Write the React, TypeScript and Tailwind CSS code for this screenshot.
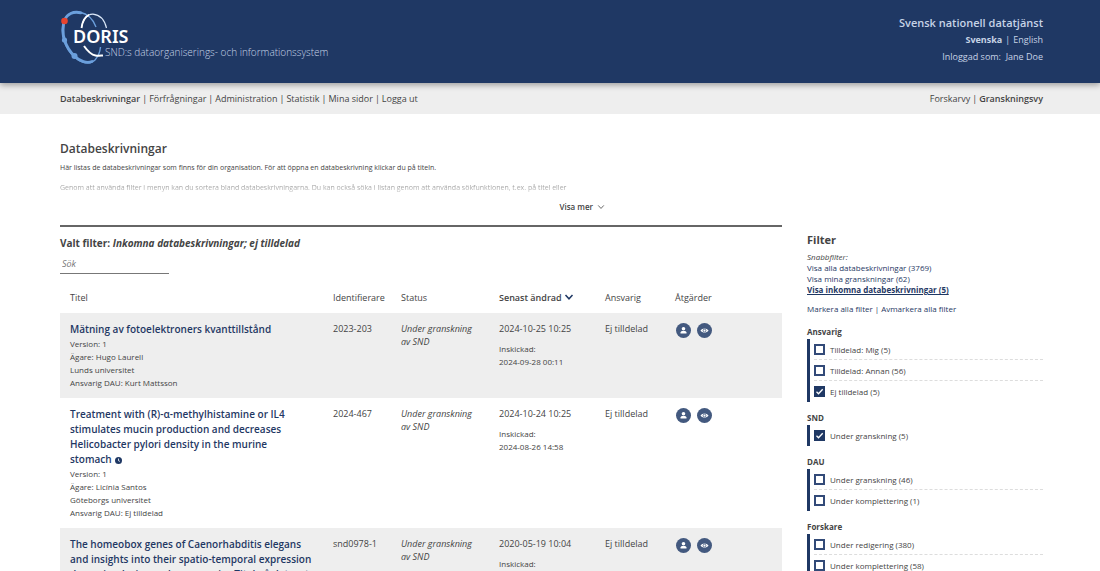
import { Fragment, type ReactNode } from "react";

type Dataset = {
  title: string;
  lastWord?: string;
  details: string[];
  id: string;
  changed: string;
  submitted: string;
};

const datasets: Dataset[] = [
  {
    title: "Mätning av fotoelektroners kvanttillstånd",
    details: ["Version: 1", "Ägare: Hugo Laurell", "Lunds universitet", "Ansvarig DAU: Kurt Mattsson"],
    id: "2023-203",
    changed: "2024-10-25 10:25",
    submitted: "2024-09-28 00:11",
  },
  {
    title: "Treatment with (R)-α-methylhistamine or IL4 stimulates mucin production and decreases Helicobacter pylori density in the murine",
    lastWord: "stomach",
    details: ["Version: 1", "Ägare: Licínia Santos", "Göteborgs universitet", "Ansvarig DAU: Ej tilldelad"],
    id: "2024-467",
    changed: "2024-10-24 10:25",
    submitted: "2024-08-26 14:58",
  },
  {
    title: "The homeobox genes of Caenorhabditis elegans and insights into their spatio-temporal expression dynamics during embryogenesis - Titel på dataset",
    details: ["Version: 1"],
    id: "snd0978-1",
    changed: "2020-05-19 10:04",
    submitted: "2020-05-19 10:04",
  },
];

const filterGroups = [
  {
    name: "Ansvarig",
    options: [
      { label: "Tilldelad: Mig (5)", checked: false },
      { label: "Tilldelad: Annan (56)", checked: false },
      { label: "Ej tilldelad (5)", checked: true },
    ],
  },
  { name: "SND", options: [{ label: "Under granskning (5)", checked: true }] },
  {
    name: "DAU",
    options: [
      { label: "Under granskning (46)", checked: false },
      { label: "Under komplettering (1)", checked: false },
    ],
  },
  {
    name: "Forskare",
    options: [
      { label: "Under redigering (380)", checked: false },
      { label: "Under komplettering (58)", checked: false },
    ],
  },
];

const menu = ["Databeskrivningar", "Förfrågningar", "Administration", "Statistik", "Mina sidor", "Logga ut"];

function LogoMark() {
  return (
    <svg viewBox="0 0 56 56" className="absolute top-0 left-0 size-14" fill="none" aria-hidden="true">
      <path d="M36 17C33 9 27 3.500 20 2.200C12 1 6 5 4 10C1.500 17 2 25 4 31C6.500 38 11 44 15 47.500C21 53 30 55 35 50C38.500 46 40 42 40.500 37" stroke="#6b9fdc" strokeWidth="1.400" />
      <path d="M21 2.800C13 1 7 4 5 9.500C2.500 15 2.500 24 4.500 30C7 38 11 43 15 46.500C20 51.500 27 53.500 32 51.500" stroke="#6b9fdc" strokeWidth="2.800" strokeLinecap="round" />
      <circle cx="4.500" cy="30" r="2.600" fill="#6b9fdc" />
      <circle cx="14.500" cy="46" r="3" fill="#6b9fdc" />
      <path d="M21.500 18C22.500 9.500 27 4 33 4.200C39.500 4.800 44.500 10 46.500 18" stroke="#dbe8f8" strokeWidth="1.200" />
      <path d="M21.500 18C22.500 11 25 6.500 29 4.800" stroke="#fff" strokeWidth="1.800" />
      <path d="M24 36C27.500 41 31.500 44.800 35.500 45.500C38 46 40 45.700 43 45.500" stroke="#fff" strokeWidth="2" />
      <circle cx="4.500" cy="11" r="3.300" fill="#e8442e" />
    </svg>
  );
}

function Chevron({ className }: { className: string }) {
  return (
    <svg viewBox="0 0 10 8" className={className} fill="none" stroke="currentColor" aria-hidden="true">
      <path d="M1.500 2L5 5.800L8.500 2" />
    </svg>
  );
}

function RoundButton({ label, children }: { label: string; children: ReactNode }) {
  return (
    <button type="button" aria-label={label} className="flex size-[15px] items-center justify-center rounded-full bg-[#43597f] text-white">
      <svg viewBox="0 0 15 15" className="size-[15px]" aria-hidden="true">
        {children}
      </svg>
    </button>
  );
}

function Separator() {
  return <span className="px-[3px]">|</span>;
}

function DatasetRow({ data }: { data: Dataset }) {
  return (
    <tr className="align-top odd:bg-[#eeeeee]">
      <td className="px-2.5 py-[9px]">
        <a href="#" className="block text-[10px] leading-[15px] font-semibold text-[#1f3864]">
          {data.title}{" "}
          {data.lastWord && (
            <span className="whitespace-nowrap">
              {data.lastWord}
              <svg viewBox="0 0 8 8" className="ml-[3px] inline size-[7px]" aria-hidden="true">
                <circle cx="4" cy="4" r="4" fill="#1f3864" />
                <path d="M4 1.800V4.200L5.500 5" stroke="#fff" strokeWidth="1" fill="none" />
              </svg>
            </span>
          )}
        </a>
        <div className="text-[8px] leading-[13px]">
          {data.details.map((d) => (
            <p key={d}>{d}</p>
          ))}
        </div>
      </td>
      <td className="py-[9px] pl-2.5">{data.id}</td>
      <td className="py-[9px] pr-3 pl-2.5 italic">Under granskning av&nbsp;SND</td>
      <td className="py-[9px] pl-2.5">
        <p>{data.changed}</p>
        <p className="mt-[7px] text-[8px] leading-[13px]">
          Inskickad:
          <br />
          {data.submitted}
        </p>
      </td>
      <td className="py-[9px] pl-2.5">Ej tilldelad</td>
      <td className="py-2.5 pl-[11px]">
        <div className="flex gap-[6px]">
          <RoundButton label="Tilldela">
            <circle cx="7.500" cy="5.700" r="1.800" fill="#fff" />
            <path d="M4.500 10.600V9.600C4.500 8.400 5.600 7.900 6.500 7.900H8.500C9.400 7.900 10.500 8.400 10.500 9.600V10.600Z" fill="#fff" />
          </RoundButton>
          <RoundButton label="Visa">
            <path d="M3.500 7.600C5.300 4.700 9.700 4.700 11.500 7.600C9.700 10.400 5.300 10.400 3.500 7.600Z" fill="#fff" />
            <circle cx="7.500" cy="7.600" r="1.400" fill="#fff" stroke="#43597f" strokeWidth="0.800" />
          </RoundButton>
        </div>
      </td>
    </tr>
  );
}

export default function App() {
  return (
    <div className="h-screen overflow-hidden bg-white font-['Open_Sans',sans-serif] text-[9px] leading-[13px] text-[#444444]">
      <header className="relative flex h-[83px] justify-between bg-[#1f3864] pr-[57px] pl-[60px] text-[#c6d3e6] shadow-[0_2px_6px_rgba(0,0,0,0.35)]">
        <a href="#" className="relative mt-[10px] block h-14">
          <LogoMark />
          <span className="relative block pt-[14px] pl-[13px] font-['Noto_Sans',sans-serif] text-[18px] leading-6 font-semibold text-white">DORIS</span>
          <span className="relative -mt-px block pl-[45px] text-[10px] leading-[11px] font-light">SND:s dataorganiserings- och informationssystem</span>
        </a>
        <div className="pt-[14px] text-right leading-[17px]">
          <p className="text-[11px] font-semibold">Svensk nationell datatjänst</p>
          <p>
            <a href="#" className="font-bold">Svenska</a>
            <Separator />
            <a href="#">English</a>
          </p>
          <p>Inloggad som:&nbsp; Jane Doe</p>
        </div>
      </header>

      <div className="flex h-[31px] items-center justify-between bg-[#eeeeee] pr-[57px] pl-[60px]">
        <nav className="flex">
          {menu.map((item, i) => (
            <Fragment key={item}>
              {i > 0 && <span className="px-[2px]">|</span>}
              <a href="#" className={i === 0 ? "font-semibold" : ""}>{item}</a>
            </Fragment>
          ))}
        </nav>
        <div>
          <a href="#">Forskarvy</a>
          <span className="px-[2px]">|</span>
          <a href="#" className="font-semibold">Granskningsvy</a>
        </div>
      </div>

      <div className="flex gap-[25px] pt-[27px] pr-[57px] pl-[60px]">
        <main className="min-w-0 flex-1">
          <h1 className="text-[12px] leading-4 font-semibold">Databeskrivningar</h1>
          <div className="border-b-2 border-[#666666] pt-1 pb-[11px]">
            <div className="w-[545px] max-w-full">
              <p className="text-[7px] leading-[14px]">
                Här listas de databeskrivningar som finns för din organisation. För att öppna en databeskrivning klickar du på titeln.
              </p>
              <p className="mt-[6px] bg-linear-to-b from-[#777777] to-[#dddddd] bg-clip-text text-[7px] leading-[14px] text-transparent">
                Genom att använda filter i menyn kan du sortera bland databeskrivningarna. Du kan också söka i listan genom att använda sökfunktionen, t.ex. på titel eller
              </p>
              <button type="button" className="mt-[5px] ml-auto flex items-center gap-1 text-[8px] leading-[14px] font-semibold">
                Visa mer
                <Chevron className="h-2 w-2" />
              </button>
            </div>
          </div>
          <h2 className="mt-[9px] text-[10px] leading-[14px] font-bold">
            Valt filter: <em>Inkomna databeskrivningar; ej tilldelad</em>
          </h2>
          <input
            type="search"
            aria-label="Sök"
            placeholder="Sök"
            className="mt-1 block h-5 w-[109px] border-b border-[#777777] px-[2px] text-[9px] outline-none placeholder:text-[#777777] placeholder:italic"
          />
          <table className="mt-[9px] w-full table-fixed text-left">
            <colgroup>
              <col />
              <col className="w-[68px]" />
              <col className="w-[98px]" />
              <col className="w-[106px]" />
              <col className="w-[70px]" />
              <col className="w-[117px]" />
            </colgroup>
            <thead>
              <tr className="h-[30px] [&>th]:pb-[2px] [&>th]:pl-2.5 [&>th]:font-normal">
                <th>Titel</th>
                <th>Identifierare</th>
                <th>Status</th>
                <th>
                  <button type="button" className="flex items-center gap-[2px] font-semibold">
                    Senast ändrad
                    <Chevron className="h-2 w-2.5 stroke-[1.500] text-[#1f3864]" />
                  </button>
                </th>
                <th>Ansvarig</th>
                <th>Åtgärder</th>
              </tr>
            </thead>
            <tbody>
              {datasets.map((d) => (
                <DatasetRow key={d.id} data={d} />
              ))}
            </tbody>
          </table>
        </main>

        <aside className="w-[236px] pt-[91px] text-[8px] leading-[11px]">
          <h2 className="text-[11px] leading-4 font-bold">Filter</h2>
          <p className="mt-[3px] italic">Snabbfilter:</p>
          <ul className="text-[#1f3864]">
            <li><a href="#">Visa alla databeskrivningar (3769)</a></li>
            <li><a href="#">Visa mina granskningar (62)</a></li>
            <li><a href="#" className="font-bold underline">Visa inkomna databeskrivningar (5)</a></li>
          </ul>
          <p className="mt-2 text-[#1f3864]">
            <button type="button">Markera alla filter</button>
            <span className="px-[2px]">|</span>
            <button type="button">Avmarkera alla filter</button>
          </p>
          <div className="mt-3 flex flex-col gap-2.5">
            {filterGroups.map((g) => (
              <fieldset key={g.name}>
                <legend className="mb-[2px] font-bold">{g.name}</legend>
                <div className="divide-y divide-dashed divide-[#dddddd] border-l-[3px] border-[#1f3864] pl-1">
                  {g.options.map((o) => (
                    <label key={o.label} className="flex h-[21px] items-center gap-[5px]">
                      <input
                        type="checkbox"
                        defaultChecked={o.checked}
                        className="peer size-[11px] appearance-none border-2 border-[#324a78] bg-white checked:border-[#1f3864] checked:bg-[#1f3864]"
                      />
                      <svg viewBox="0 0 11 11" className="-ml-4 size-[11px] opacity-0 peer-checked:opacity-100" fill="none" stroke="#fff" strokeWidth="1.300" aria-hidden="true">
                        <path d="M2.500 5.800L4.500 7.800L8.700 3.200" />
                      </svg>
                      {o.label}
                    </label>
                  ))}
                </div>
              </fieldset>
            ))}
          </div>
        </aside>
      </div>
    </div>
  );
}
